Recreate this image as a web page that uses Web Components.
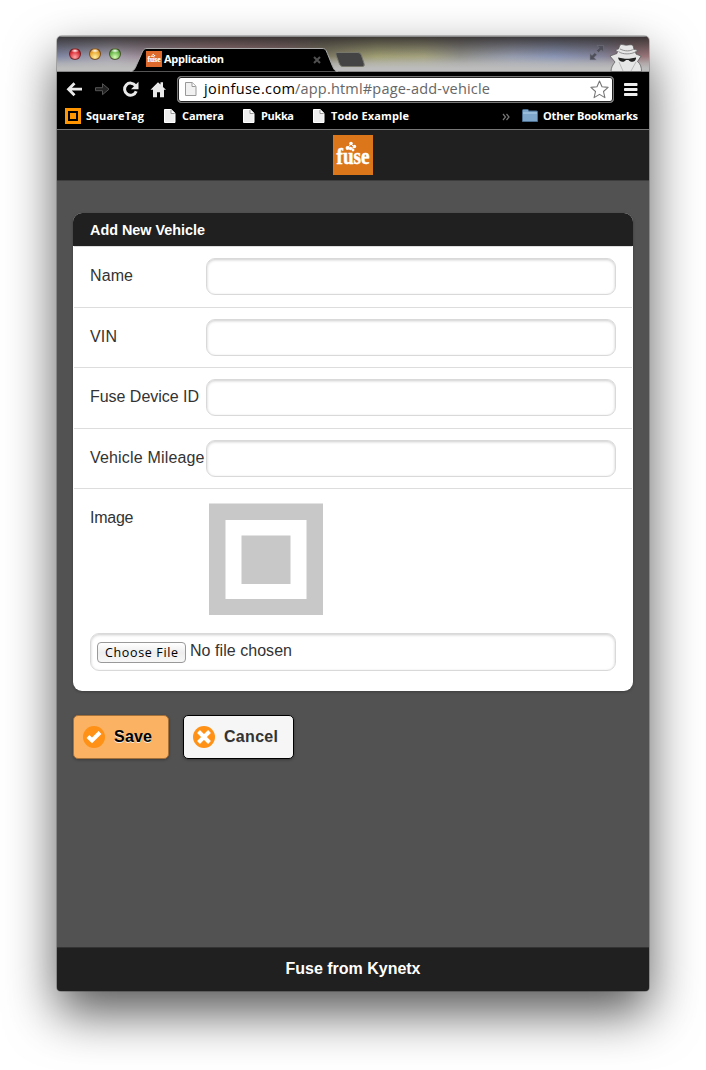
<!DOCTYPE html>
<html lang="en">
<head>
<meta charset="utf-8">
<title>Application</title>
<style>
body{margin:0;background:#fff;width:706px;height:1070px;overflow:hidden;font-family:"Liberation Sans",Arial,sans-serif}
</style>
</head>
<body>
<browser-window>
  <tab-strip slot="chrome" label="Application"></tab-strip>
  <nav-bar slot="chrome" host="joinfuse.com" path="/app.html#page-add-vehicle"></nav-bar>
  <bookmark-bar slot="chrome"></bookmark-bar>
  <vehicle-page></vehicle-page>
</browser-window>
<script>
function define(name, html, ready) {
  const tpl = document.createElement('template');
  tpl.innerHTML = html;
  customElements.define(name, class extends HTMLElement {
    connectedCallback() {
      if (this.shadowRoot) return;
      this.attachShadow({mode: 'open'}).append(tpl.content.cloneNode(true));
      if (ready) ready(this, this.shadowRoot);
    }
  });
}

/* A single line of text tracked to a given width. */
define('text-run', `<style>:host{display:inline-block;white-space:pre;text-align:left}span{display:inline-block}</style><span><slot></slot></span>`, (el, root) => {
  const w = +el.getAttribute('width');
  if (!w) return;
  el.style.width = w + 'px';
  const s = root.querySelector('span');
  const n = el.textContent.length;
  s.style.letterSpacing = ((w - s.getBoundingClientRect().width) / (n - 1)).toFixed(3) + 'px';
});

define('page-icon', `<style>:host{display:block;width:12px;height:14px}svg{display:block}</style>
<svg width="12" height="14" viewBox="0 0 12 14"><path d="M.5.5h6.700l3.800 3.800v9.200H.5z" fill="var(--paper,#eee)" stroke="var(--edge,#fff)"/><path d="M7 .8v3.700h3.700" fill="#fff" stroke="var(--fold,#999)"/></svg>`);

define('fuse-logo', `<style>
:host{display:block;width:40px;height:40px;background:#dc761b}
svg{display:block;width:100%;height:100%;overflow:visible}
text{font-family:"Liberation Serif",serif;font-weight:bold;fill:#fff;stroke:#fff;stroke-width:.5px}
</style>
<svg viewBox="0 0 40 40"><text x="3.500" y="28.500" font-size="23" textLength="33" lengthAdjust="spacingAndGlyphs">fuse</text>
<g fill="#fff"><circle cx="14.500" cy="13" r="1.900"/><circle cx="18" cy="8.500" r="1.800"/><circle cx="21.500" cy="11.500" r="1.700"/><circle cx="17.500" cy="13.500" r="1.700"/><circle cx="20" cy="15" r="1.400"/></g><path d="M14.500 13l3.500-4 3 3-3.500 2.300" fill="none" stroke="#fff"/></svg>`);

define('browser-window', `<style>
:host{display:flex;flex-direction:column;width:592px;height:955px;margin:36px 0 0 57px;border-radius:5px 5px 4px 4px;overflow:hidden;background:#525252;box-shadow:0 0 0 1px rgba(0,0,0,.22),0 22px 50px rgba(0,0,0,.66)}
::slotted(vehicle-page){flex:1}
</style><slot name="chrome"></slot><slot></slot>`);

define('tab-strip', `<style>
:host{display:flex;height:36px;box-sizing:border-box;position:relative;border-bottom:1px solid #888;
background:linear-gradient(#8b8b8b 0 1px,transparent 1px),linear-gradient(rgba(50,46,46,.92) 0,rgba(60,56,56,.6) 25%,rgba(150,150,150,.12) 58%,rgba(187,187,187,.75) 78%,#bcbcbc 92%),linear-gradient(90deg,#7d84a4 0,#a3a0b0 9%,#9c8794 15%,#a07679 27%,#8a6a6a 38%,#77725a 45%,#a09f6e 54%,#a4a27a 62%,#8f8f88 68%,#949bb0 77%,#8794b8 84%,#82829c 92%,#8c6c72 97%,#9a7074 100%)}
.lights{display:flex;gap:8px;padding:12px 0 0 12px}
.lights i{width:12px;height:12px;border-radius:50%;box-sizing:border-box;border:1px solid rgba(50,20,20,.6)}
.r{background:radial-gradient(ellipse 4px 2px at 50% 18%,#fff,transparent),radial-gradient(circle at 50% 80%,#ffa6a6,#d92d35 60%,#a5171e)}
.y{background:radial-gradient(ellipse 4px 2px at 50% 18%,#fff,transparent),radial-gradient(circle at 50% 80%,#fff0a0,#e8a32c 60%,#b66e16)}
.g{background:radial-gradient(ellipse 4px 2px at 50% 18%,#fff,transparent),radial-gradient(circle at 50% 80%,#d8ffb5,#67b548 60%,#397e26)}
.shape{position:absolute;left:0;top:0}
.tab{display:flex;align-items:center;margin-left:25px;padding-top:12px;height:22px;width:175px;color:#fff;font:bold 11px/22px "Open Sans","Noto Sans",sans-serif;position:relative}
fuse-logo{width:16px;height:16px;margin-right:2px;background:#dd6a2c}
text-run{margin-top:-1px}
.tab svg{margin-top:1px}
.x{margin-left:auto}
</style>
<svg class="shape" width="592" height="36"><path d="M73 36c4-1 5-3 7-8l4-9c2-5 3-6.500 6-6.500h175c4 0 4 2 6 6.500l4 10c2 5 3 6 6 7z" fill="#000" stroke="#aaa" stroke-width="1"/>
<path d="M280 16.500h21q2.500 0 3.500 3l2.500 8q1 3-1.500 3h-20q-2 0-3-2.500l-3.500-9q-1-2.500 1-2.500z" fill="#444" stroke="#77776c"/>
<path d="M540 9.500h6.500v6.500l-2.200-2.200-2.800 2.800-2-2 2.800-2.800zM533 17.500l2 2 2.800-2.800 2 2-2.800 2.800 2.200 2.200H533z" fill="#4e4f59" stroke="#777986" stroke-width=".5"/>
<path d="M554 35.500c0-4 2-7 4-9.500l-5-6 7-2.500.500-2c-2 0-2-2 1-2.500l1.500-4c2-1.300 4 .4 6.500.2s5-1 6.500.3l1 3.800c4 .7 4 2 1.500 2.800l.5 2 5 2-3.500 5.500c3 2 4 6 4 9.900z" fill="#e6e6e6" stroke="#555" stroke-width=".7"/>
<path d="M561.500 15.500c4 3.200 13 3.200 17.500 0M563 13c5 2.500 10 2.500 14 0" fill="none" stroke="#777" stroke-width=".8"/><path d="M562 26l4 9m13-9l-5 9" stroke="#bbb"/>
<path d="M561 21.500l7 1.200h4l7-1.200c.5 4-5 6-7.500 2.600h-2.500c-2.500 3.400-7.500 1.400-8-2.600z" fill="#222"/></svg>
<div class="lights"><i class="r"></i><i class="y"></i><i class="g"></i></div>
<div class="tab"><fuse-logo></fuse-logo><text-run width="60" id="t"></text-run><svg class="x" width="8" height="8"><path d="M1 1l6 6M7 1L1 7" stroke="#505050" stroke-width="2"/></svg></div>`, (el, root) => {
  const old = root.getElementById('t');
  const t = document.createElement('text-run');
  t.setAttribute('width', '60');
  t.textContent = el.getAttribute('label');
  old.replaceWith(t);
});

define('nav-bar', `<style>
:host{display:flex;height:32px;background:#000;align-items:center;box-sizing:border-box;padding:0 11px 0 9px}
svg{display:block;flex:none}
.nav{display:flex;width:111px}
.box{display:flex;align-items:center;box-sizing:border-box;width:437px;height:27px;border:1px solid #777;border-radius:4px;background:#fff;box-shadow:inset 0 0 0 1px #222;padding:0 4px 0 7px;font:14.500px/22px "Open Sans","Noto Sans",sans-serif;color:#000;margin-top:2px}
.u{margin-top:-1px}
page-icon{--paper:#f1f1f1;--edge:#999;--fold:#999;margin-right:7px}
.p{color:#666}.star{margin-left:auto}.menu{margin-left:auto}
</style>
<div class="nav"><svg width="111" height="32"><g transform="translate(0 -.8)"><path d="M2 18h14M8.500 12L2.500 18l6 6" fill="none" stroke="#e9e9e9" stroke-width="2.800"/><path d="M29.500 16.500h7v-4l6.500 5.500-6.500 5.500v-4h-7z" fill="#222" stroke="#555"/><path d="M69.500 14.500A6 6 0 1 0 70.200 20" fill="none" stroke="#e9e9e9" stroke-width="3"/><path d="M72.500 10.500v7.500h-7.500z" fill="#e9e9e9"/><path d="M84.500 18.500L92 11l2.500 2.300V11H97v4.700l3 2.800h-2v7.500h-4v-5h-3v5h-4v-7.500z" fill="#e9e9e9"/></g></svg></div>
<div class="box"><page-icon></page-icon><span class="u"></span><svg class="star" width="19" height="19" viewBox="0 0 19 19"><path d="M9.500 1l2.500 5.800 6.100.6-4.600 4.100 1.400 6.100-5.400-3.200-5.400 3.200 1.400-6.100L.9 7.400l6.100-.6z" fill="#fff" stroke="#777" stroke-width="1.100" stroke-linejoin="round"/></svg></div>
<svg class="menu" width="14" height="32"><g fill="#eee"><rect x="0" y="11" width="13.500" height="3" rx=".8"/><rect x="0" y="16" width="13.500" height="3" rx=".8"/><rect x="0" y="21" width="13.500" height="3" rx=".8"/></g></svg>`, (el, root) => {
  const u = root.querySelector('.u');
  for (const [key, w] of [['host', 91], ['path', 195]]) {
    const t = document.createElement('text-run');
    t.setAttribute('width', w);
    t.textContent = el.getAttribute(key);
    if (key === 'path') t.className = 'p';
    u.append(t);
  }
});

define('bookmark-bar', `<style>
:host{display:flex;height:26px;box-sizing:border-box;background:#000;border-bottom:1px solid #777;padding:0 11px 1px 8px;align-items:center;color:#fff;font:bold 11px/24px "Open Sans","Noto Sans",sans-serif}
.i{display:flex;align-items:center}
svg{display:block}
</style>
<div class="i" style="gap:5px;width:99px"><svg width="16" height="16"><rect width="16" height="16" fill="#ff9500"/><path d="M3 3h10v10H3z" fill="#000"/><path d="M5 5h6v6H5z" fill="#ff9500"/></svg><text-run width="58">SquareTag</text-run></div>
<div class="i" style="gap:6px;width:79px"><page-icon></page-icon><text-run width="42">Camera</text-run></div>
<div class="i" style="gap:6px;width:70px"><page-icon></page-icon><text-run width="33">Pukka</text-run></div>
<div class="i" style="gap:6px"><page-icon></page-icon><text-run width="78">Todo Example</text-run></div>
<svg style="margin:2px 0 0 auto" width="8" height="8"><path d="M1 1l2.500 3L1 7M4.500 1L7 4 4.500 7" fill="none" stroke="#777" stroke-width="1.200"/></svg>
<svg style="margin:-1px 5px 0 12px" width="16" height="14"><path d="M.5 12.500V1.500q0-1 1-1h4q1 0 1 1V2h8q1 0 1 1v9.500z" fill="#7fa7cb" stroke="#496e90"/><path d="M1 4h14" stroke="#b2d1e9"/></svg><text-run width="95">Other Bookmarks</text-run>`);

define('form-row', `<style>
:host{display:flex;box-sizing:border-box;height:60.500px;padding:11px 16px 0;border-top:1px solid #ddd;font-size:16px;color:#333}
.l{width:116px;flex:none;line-height:18px;padding-top:9px;box-sizing:border-box;white-space:nowrap}
slot{display:block}
</style><div class="l"><text-run></text-run></div><slot></slot>`, (el, root) => {
  const t = document.createElement('text-run');
  t.setAttribute('width', el.getAttribute('w'));
  t.textContent = el.getAttribute('label');
  root.querySelector('text-run').replaceWith(t);
});

define('text-field', `<style>
:host{display:flex;box-sizing:border-box;width:410px;height:37px;border:1px solid #d9d9d9;border-radius:9px;background:#fff;box-shadow:inset 0 1px 3px rgba(0,0,0,.2)}
</style><slot></slot>`);

define('action-button', `<style>
:host{display:flex;box-sizing:border-box;height:44px;align-items:center;border:1px solid var(--line);border-radius:5px;background:var(--face);color:var(--ink);font:bold 16px/20px "Liberation Sans",Arial,sans-serif;text-shadow:0 1px 0 #eee;padding-left:9px;gap:9px;box-shadow:0 1px 3px rgba(0,0,0,.3)}
svg{display:block;flex:none}
</style><svg width="22" height="22"><circle cx="11" cy="11" r="11" fill="#ff9117"/><path fill="none" stroke="#fff" stroke-width="4"/></svg><slot></slot>`, (el, root) => {
  root.querySelector('path').setAttribute('d', el.getAttribute('icon') === 'check' ? 'M5 10.500l4 4L17 6.500' : 'M5.500 5.500l11 11M16.500 5.500l-11 11');
});

define('vehicle-page', `<style>
:host{display:flex;flex-direction:column;background:#525252}
header{height:51px;background:#202020;border-bottom:1px solid #3d3d3d;display:flex;justify-content:center;padding-top:5px;box-sizing:border-box}
main{flex:1;padding:32px 16px 0}
.card{border-radius:9px;overflow:hidden;background:#fff;box-shadow:0 1px 3px rgba(0,0,0,.25);height:478px;border:0}
h1{margin:0;height:33px;background:#202020;color:#fff;font-size:14.400px;line-height:34px;padding-left:17px}
form-row{margin:0 1px}
form-row.last{height:145px}
.pic{display:block;margin:3px 0 0 3px}
.file{width:526px;height:38px;margin:0 0 0 17px;align-items:center;padding:0 6px;font-size:16px;color:#333}
.choose{box-sizing:border-box;width:89px;height:21px;border:1px solid #999;border-radius:4px;background:linear-gradient(#fff,#eee 50%,#f7f7f7);font:12.500px/19px "Open Sans","Noto Sans",sans-serif;color:#000;padding-left:7px;margin:1px 4px 0 0}
.buttons{display:flex;gap:14px;margin-top:24px}
footer{height:44px;box-sizing:border-box;background:#202020;border-top:1px solid #333;color:#fff;text-align:center;font:bold 16px/41px "Liberation Sans",Arial,sans-serif}
</style>
<header><fuse-logo></fuse-logo></header>
<main>
<div class="card"><h1><text-run width="115">Add New Vehicle</text-run></h1>
<form-row label="Name" w="43"><text-field></text-field></form-row>
<form-row label="VIN" w="27"><text-field></text-field></form-row>
<form-row label="Fuse Device ID" w="109"><text-field></text-field></form-row>
<form-row label="Vehicle Mileage" w="114.500"><text-field></text-field></form-row>
<form-row class="last" label="Image" w="43.500"><svg class="pic" width="114" height="112"><path d="M0 .5h114v111.500H0z" fill="#c8c8c8"/><path d="M16.500 17h81v79h-81z" fill="#fff"/><path d="M32.500 32.500h49v48.500h-49z" fill="#c8c8c8"/></svg></form-row>
<text-field class="file"><span class="choose"><text-run width="73">Choose File</text-run></span><text-run width="102" style="margin-top:-3px">No file chosen</text-run></text-field>
</div>
<div class="buttons">
<action-button icon="check" style="width:96px;--line:#a5713b;--face:#fbb262;--ink:#000"><text-run width="38">Save</text-run></action-button>
<action-button icon="cross" style="width:111px;--line:#000;--face:#f6f6f6;--ink:#333"><text-run width="54">Cancel</text-run></action-button>
</div>
</main>
<footer><text-run width="135">Fuse from Kynetx</text-run></footer>`);
</script>
</body>
</html>
